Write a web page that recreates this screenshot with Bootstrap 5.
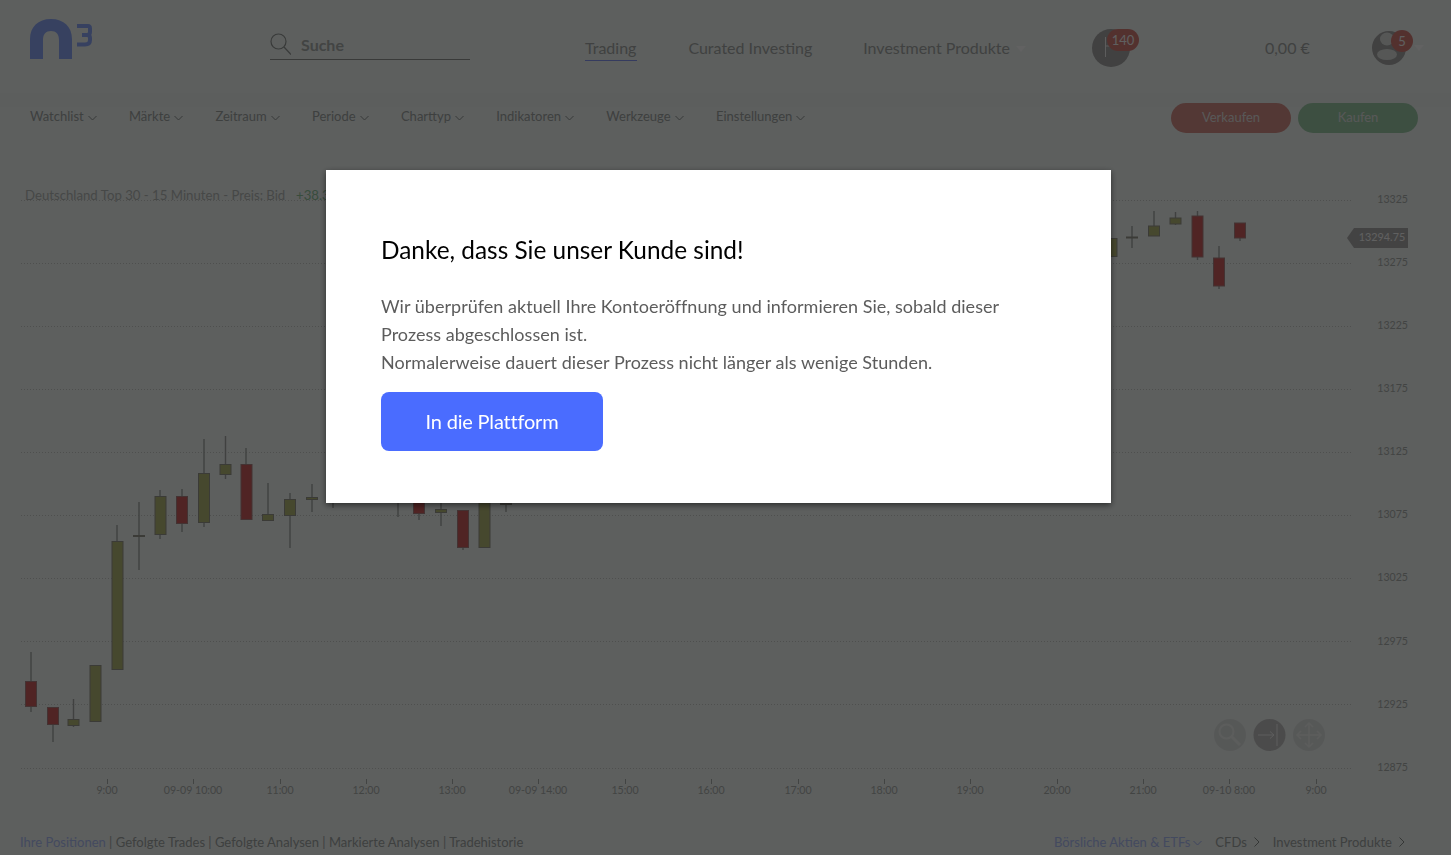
<!DOCTYPE html>
<html lang="de">
<head>
<meta charset="utf-8">
<title>Trading</title>
<link href="https://cdn.jsdelivr.net/npm/bootstrap@5.3.0/dist/css/bootstrap.min.css" rel="stylesheet">
<style>
html,body{height:100%;overflow:hidden}
body{font-family:Lato,"Open Sans",sans-serif;background:#e8edeb;color:#9ba09e}
.app-shell{height:855px;width:1451px}
.top-bar{height:93px;padding-left:30px;box-shadow:0 14px 0 rgba(0,0,0,.012)}
.brand-mark{width:62px;height:40px;margin-top:19px;margin-right:178px}
.search-box{width:200px;height:27px;margin-top:33px;border-bottom:1px solid #8e9290;font-size:16px;font-weight:700;color:#a6aaa8;line-height:24px;gap:10px;margin-right:115px}
.main-link{font-size:16px;color:#a0a4a2;line-height:20px;margin-top:38px;height:24px;text-decoration:none}
.main-link.is-current{height:23px;border-bottom:1px solid #8494ee;margin-right:51px;padding-right:1px}
.link-curated{margin-right:51px}
.drop-caret{display:inline-block;width:0;height:0;border:5px solid transparent;border-top:6px solid #f4f4f4;border-bottom:0;margin-left:6px;vertical-align:2px}
.flag-wrap{width:48px;height:40px;margin-top:29px;margin-left:66px;margin-right:125px}
.round-ico{width:38px;height:38px;border-radius:50%;background:#a2a2a2}
.flag-wrap svg,.user-wrap svg{display:block}
.count-pill{top:0;left:15px;height:22px;min-width:32px;border-radius:11px;background:#d07a74;color:#eeeeee;font-size:13px;line-height:22px;text-align:center}
.balance{font-size:16px;line-height:20px;margin-top:38px;color:#a0a4a2;width:107px}
.user-wrap{width:52px;height:40px;margin-top:31px}
.count-dot{top:-1px;left:19px;width:22px;height:22px;border-radius:50%;background:#d07a74;color:#eeeeee;font-size:13px;line-height:22px;text-align:center}
.user-caret{top:14px;left:42px}
.tool-bar{height:47px;padding:10px 33px 0 30px}
.tool-item{font-size:13px;color:#9ba09e;line-height:26px;margin-right:32.300px;white-space:nowrap}
.tool-item svg{margin-left:4px;vertical-align:0}
.trade-btn{width:120px;height:30px;border-radius:15px;font-size:13px;line-height:28px;text-align:center;color:#dcdcdc}
.btn-sell{background:#d08c85}
.btn-buy{background:#9ac6a4;margin-left:7px}
.chart-svg{display:block;width:1451px;height:690px}
.grid-ln{stroke:#c2c6c4;stroke-width:1;stroke-dasharray:1 2}
.axis-txt{font-size:10.600px;fill:#a6aaa8}
.chart-head{font-size:13.200px;fill:#b0b4b2}
.chart-gain{font-size:13.200px;fill:#8ec09a}
.wick{stroke:#a0a2a0;stroke-width:1.4}
.up{fill:#b0b474;stroke:#94948a}
.down{fill:#c85a5a;stroke:#a88080}
.foot-bar{height:25px;padding:0 46px 0 20px;font-size:13px;line-height:24px;color:#9ba09e}
.foot-bar a{text-decoration:none;color:inherit}
.foot-bar a.is-blue{color:#a9b8ee}
.foot-bar svg{margin-left:6px;vertical-align:0}
.foot-bar svg.chev{margin-left:3px;vertical-align:1px}
.foot-links{gap:13px}
.dim-layer{position:fixed;inset:0;background:rgba(0,0,0,.6);z-index:1040}
.notice-box{position:fixed;left:326px;top:170px;width:785px;height:333px;z-index:1050;background:#fff;border:0;border-radius:0;box-shadow:0 2px 6px rgba(0,0,0,.55);padding:62px 55px 0}
.notice-title{font-size:24.400px;line-height:36px;color:#000;font-weight:400;margin-bottom:24px;margin-top:0}
.notice-text{font-size:18px;line-height:28px;color:#5c5c5c;margin-bottom:16px;letter-spacing:.025px}
.notice-btn{background:#4a6cff;border:0;color:#fff;border-radius:8px;width:222px;height:59px;font-size:20px;padding:0 0 2px;letter-spacing:-.2px}
</style>
</head>
<body>
<div class="app-shell d-flex flex-column">
  <header class="top-bar d-flex align-items-start flex-shrink-0">
    <svg class="brand-mark" viewBox="0 0 62 40" aria-label="n3 Logo">
      <path d="M0 40V20C0 8 8 0 21 0S42 8 42 20V40H29V21C29 15 26 12 21 12S13 15 13 21V40Z" fill="#8aa4f0"/>
      <path d="M47 7H58C59.500 7 60 8 60 9.500V13C60 15 59 16 57 16H52M57 16C59 16 60 17 60 19V21C60 24 58 25.500 55 25.500H47" fill="none" stroke="#8aa4f0" stroke-width="4"/>
    </svg>
    <div class="search-box d-flex align-items-start">
      <svg width="21" height="22" viewBox="0 0 21 22" fill="none" stroke="#8e9290" stroke-width="1.2"><circle cx="8.500" cy="8.500" r="7.500"/><path d="M14 14L21 21.500"/></svg>
      <span>Suche</span>
    </div>
    <a class="main-link is-current" href="#">Trading</a>
    <a class="main-link link-curated" href="#">Curated Investing</a>
    <a class="main-link" href="#">Investment Produkte<span class="drop-caret"></span></a>
    <div class="flag-wrap position-relative">
      <svg class="round-ico" viewBox="0 0 38 38" fill="none" stroke="#e8e8e8" stroke-width="1"><path d="M13.500 28V8M13.500 17H20"/></svg>
      <span class="count-pill position-absolute">140</span>
    </div>
    <div class="balance">0,00 €</div>
    <div class="user-wrap position-relative">
      <svg width="34" height="34" viewBox="0 0 34 34"><circle cx="17" cy="17" r="17" fill="#a2a2a2"/><ellipse cx="15" cy="8" rx="7" ry="6.500" fill="#d6dad8"/><ellipse cx="15" cy="23.500" rx="10" ry="5.500" fill="#d6dad8"/></svg>
      <span class="count-dot position-absolute">5</span>
      <span class="drop-caret user-caret position-absolute m-0"></span>
    </div>
  </header>

  <div class="tool-bar d-flex align-items-start flex-shrink-0">
    <div class="tool-item">Watchlist<svg width="9" height="6" viewBox="0 0 9 6" fill="none" stroke="#8c908e"><path d="M.5 1l4 4 4-4"/></svg></div>
    <div class="tool-item">Märkte<svg width="9" height="6" viewBox="0 0 9 6" fill="none" stroke="#8c908e"><path d="M.5 1l4 4 4-4"/></svg></div>
    <div class="tool-item">Zeitraum<svg width="9" height="6" viewBox="0 0 9 6" fill="none" stroke="#8c908e"><path d="M.5 1l4 4 4-4"/></svg></div>
    <div class="tool-item">Periode<svg width="9" height="6" viewBox="0 0 9 6" fill="none" stroke="#8c908e"><path d="M.5 1l4 4 4-4"/></svg></div>
    <div class="tool-item">Charttyp<svg width="9" height="6" viewBox="0 0 9 6" fill="none" stroke="#8c908e"><path d="M.5 1l4 4 4-4"/></svg></div>
    <div class="tool-item">Indikatoren<svg width="9" height="6" viewBox="0 0 9 6" fill="none" stroke="#8c908e"><path d="M.5 1l4 4 4-4"/></svg></div>
    <div class="tool-item">Werkzeuge<svg width="9" height="6" viewBox="0 0 9 6" fill="none" stroke="#8c908e"><path d="M.5 1l4 4 4-4"/></svg></div>
    <div class="tool-item">Einstellungen<svg width="9" height="6" viewBox="0 0 9 6" fill="none" stroke="#8c908e"><path d="M.5 1l4 4 4-4"/></svg></div>
    <div class="trade-btn btn-sell ms-auto">Verkaufen</div>
    <div class="trade-btn btn-buy">Kaufen</div>
  </div>

  <svg class="chart-svg flex-shrink-0" viewBox="0 140 1451 690">
    <g class="grid-ln">
      <path d="M21 200.500H1352M21 263.500H1352M21 326.500H1352M21 389.500H1352M21 452.500H1352M21 515.500H1352M21 578.500H1352M21 641.500H1352M21 704.500H1352M21 768.500H1352"/>
    </g>
    <text class="chart-head" x="25" y="199.500">Deutschland Top 30 - 15 Minuten - Preis: Bid</text>
    <text class="chart-gain" x="296" y="199.500">+38.35</text>
    <g text-anchor="end" class="axis-txt">
      <text x="1408" y="203">13325</text><text x="1408" y="266">13275</text><text x="1408" y="329">13225</text><text x="1408" y="392">13175</text><text x="1408" y="455">13125</text><text x="1408" y="518">13075</text><text x="1408" y="581">13025</text><text x="1408" y="645">12975</text><text x="1408" y="708">12925</text><text x="1408" y="771">12875</text>
    </g>
    <path d="M1347 238L1354 228H1408V248H1354Z" fill="#a8a8a8"/>
    <text x="1382" y="241" text-anchor="middle" font-size="10.800" fill="#f0f0f0">13294.75</text>
    <g text-anchor="middle" class="axis-txt">
      <text x="107" y="794">9:00</text><text x="193" y="794">09-09 10:00</text><text x="280" y="794">11:00</text><text x="366" y="794">12:00</text><text x="452" y="794">13:00</text><text x="538" y="794">09-09 14:00</text><text x="625" y="794">15:00</text><text x="711" y="794">16:00</text><text x="798" y="794">17:00</text><text x="884" y="794">18:00</text><text x="970" y="794">19:00</text><text x="1057" y="794">20:00</text><text x="1143" y="794">21:00</text><text x="1229" y="794">09-10 8:00</text><text x="1316" y="794">9:00</text>
    </g>
    <path stroke="#a6aaa8" d="M107.500 779v5M193.500 779v5M280.500 779v5M366.500 779v5M452.500 779v5M538.500 779v5M625.500 779v5M711.500 779v5M798.500 779v5M884.500 779v5M970.500 779v5M1057.500 779v5M1143.500 779v5M1229.500 779v5M1316.500 779v5"/>
    <path class="wick" d="M31 652V712M53 707V742M73.500 699V727M117 525V541M139 502V570M160 490V539M182 489V532M204 439V527M225.500 436V479M246 448V519M268 483V521M290 493V548M312 484V512M333 495V508M398 495V517M419 495V520M441 495V526M463 510V550M506 495V512M1132 226V248M1154 211V236M1175.500 212V225M1197.500 211V260M1219 246V289M1240 223V241"/>
    <g>
      <rect class="down" x="25.500" y="681.500" width="11" height="25"/>
      <rect class="down" x="47.500" y="707.500" width="11" height="17"/>
      <rect class="up" x="68" y="719.500" width="11" height="6"/>
      <rect class="up" x="90" y="665.500" width="11" height="56"/>
      <rect class="up" x="112" y="541.500" width="11" height="128"/>
      <rect class="up" x="133.500" y="535.500" width="11" height="1"/>
      <rect class="up" x="155" y="496.500" width="11" height="38"/>
      <rect class="down" x="176.500" y="496.500" width="11" height="27"/>
      <rect class="up" x="198.500" y="473.500" width="11" height="49"/>
      <rect class="up" x="220" y="464.500" width="11" height="10"/>
      <rect class="down" x="241" y="464.500" width="11" height="55"/>
      <rect class="up" x="262.500" y="514.500" width="11" height="6"/>
      <rect class="up" x="284.500" y="499.500" width="11" height="16"/>
      <rect class="up" x="306.500" y="497.500" width="11" height="2"/>
      <rect class="up" x="327.500" y="500.500" width="11" height="1"/>
      <rect class="down" x="413.500" y="498.500" width="11" height="15"/>
      <rect class="up" x="435.500" y="509.500" width="11" height="3"/>
      <rect class="down" x="457.500" y="510.500" width="11" height="37"/>
      <rect class="up" x="479" y="495.500" width="11" height="52"/>
      <rect class="up" x="500.500" y="503.500" width="11" height="1"/>
      <rect class="up" x="1106" y="238.500" width="11" height="18"/>
      <rect class="up" x="1126.500" y="237" width="11" height="1"/>
      <rect class="up" x="1148.500" y="226" width="11" height="10"/>
      <rect class="up" x="1170" y="218" width="11" height="6"/>
      <rect class="down" x="1192" y="216" width="11" height="41"/>
      <rect class="down" x="1213.500" y="258" width="11" height="28"/>
      <rect class="down" x="1234.500" y="223" width="11" height="15"/>
    </g>
    <g fill="none">
      <circle cx="1230" cy="735" r="16" fill="#d8dcda"/>
      <circle cx="1226.500" cy="731.500" r="7" stroke="#e6e9e7" stroke-width="2"/>
      <path d="M1231.500 736.500L1240 745" stroke="#e6e9e7" stroke-width="3"/>
      <circle cx="1269.500" cy="735" r="16" fill="#bcbcbc"/>
      <path d="M1258 735H1274M1270 731.500L1274 735L1270 738.500M1277 724V746" stroke="#e8e8e8" stroke-width="1"/>
      <circle cx="1309" cy="735" r="16" fill="#d8dcda"/>
      <path d="M1297 735H1321M1309 723V747M1301 731L1297 735L1301 739M1317 731L1321 735L1317 739M1305 727L1309 723L1313 727M1305 743L1309 747L1313 743" stroke="#e6e9e7" stroke-width="1.500"/>
    </g>
  </svg>

  <footer class="foot-bar d-flex justify-content-between flex-shrink-0">
    <div><a class="is-blue" href="#">Ihre Positionen</a> | <a href="#">Gefolgte Trades</a> | <a href="#">Gefolgte Analysen</a> | <a href="#">Markierte Analysen</a> | <a href="#">Tradehistorie</a></div>
    <div class="d-flex foot-links">
      <a class="is-blue" href="#">Börsliche Aktien &amp; ETFs<svg class="chev" width="9" height="6" viewBox="0 0 9 6" fill="none" stroke="#a0aeee"><path d="M.5 1l4 4 4-4"/></svg></a>
      <a href="#">CFDs<svg width="7" height="10" viewBox="0 0 7 10" fill="none" stroke="#858987"><path d="M1.500 .5l4.500 4.500-4.500 4.500"/></svg></a>
      <a href="#">Investment Produkte<svg width="7" height="10" viewBox="0 0 7 10" fill="none" stroke="#858987"><path d="M1.500 .5l4.500 4.500-4.500 4.500"/></svg></a>
    </div>
  </footer>
</div>

<div class="dim-layer"></div>
<section class="notice-box card">
  <h2 class="notice-title">Danke, dass Sie unser Kunde sind!</h2>
  <p class="notice-text">Wir überprüfen aktuell Ihre Kontoeröffnung und informieren Sie, sobald dieser Prozess abgeschlossen ist.<br>Normalerweise dauert dieser Prozess nicht länger als wenige Stunden.</p>
  <div><button type="button" class="btn notice-btn">In die Plattform</button></div>
</section>
<script src="https://cdn.jsdelivr.net/npm/bootstrap@5.3.0/dist/js/bootstrap.bundle.min.js"></script>
</body>
</html>
